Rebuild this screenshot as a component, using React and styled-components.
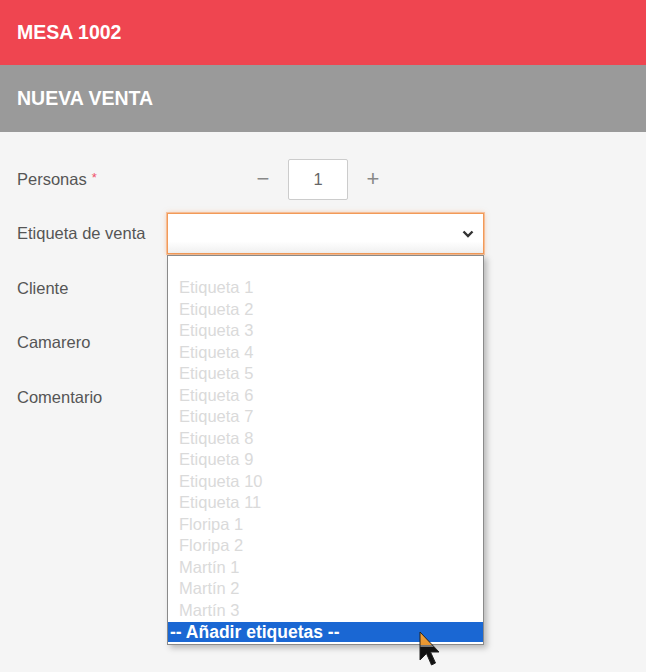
import React from "react";
import styled, { createGlobalStyle } from "styled-components";

const GlobalStyle = createGlobalStyle`
  html, body {
    margin: 0;
    padding: 0;
    background: #f5f5f5;
  }
  body {
    font-family: "Liberation Sans", Arial, sans-serif;
  }
`;

const Page = styled.div`
  width: 646px;
  height: 672px;
  background: #f5f5f5;
  overflow: hidden;
  position: relative;
`;

const Bar = styled.div`
  display: flex;
  align-items: center;
  height: ${(p) => p.$height}px;
  padding-left: 17px;
  background: ${(p) => p.$bg};
  color: #fff;
  font-weight: bold;
  font-size: 19.5px;
`;

const Form = styled.div`
  padding: 20px 0 0 17px;
`;

const Row = styled.div`
  display: grid;
  grid-template-columns: 150px 317px;
  align-items: center;
  height: 54.5px;
`;

const Label = styled.div`
  font-size: 16.5px;
  color: #555;
`;

const Required = styled.span`
  color: #f0506a;
  font-size: 13px;
  vertical-align: 3px;
  margin-left: 5px;
`;

const Stepper = styled.div`
  display: flex;
  align-items: center;
  gap: 13px;
  padding-left: 84px;
`;

const StepButton = styled.div`
  width: 24px;
  text-align: center;
  color: #888;
  font-size: 22px;
  line-height: 1;
`;

const NumberBox = styled.div`
  width: 58px;
  height: 39px;
  border: 1px solid #ccc;
  border-radius: 2px;
  background: #fff;
  display: flex;
  align-items: center;
  justify-content: center;
  font-size: 16.5px;
  color: #666;
`;

const SelectWrap = styled.div`
  position: relative;
`;

const SelectBox = styled.div`
  height: 39px;
  border: 1px solid #f29a58;
  box-shadow: 0 0 0 1px rgba(245, 160, 100, 0.55), 0 0 5px rgba(245, 150, 80, 0.5);
  background: linear-gradient(#fff 70%, #f0f0f0);
  display: flex;
  align-items: center;
  justify-content: flex-end;
  padding-right: 9px;
`;

const Popup = styled.div`
  position: absolute;
  top: 42px;
  left: 0;
  width: 315px;
  height: 388px;
  border: 1px solid #8a8a8a;
  background: #fff;
  box-shadow: 3px 3px 6px rgba(0, 0, 0, 0.25);
  z-index: 2;
  display: flex;
  flex-direction: column;
`;

const GroupLabel = styled.div`
  height: 21px;
`;

const Option = styled.div`
  height: 21.5px;
  line-height: 21.5px;
  padding-left: 11px;
  font-size: 16.5px;
  color: #dadada;
  white-space: nowrap;
`;

const ActiveOption = styled.div`
  margin-top: 1px;
  height: 20px;
  line-height: 20px;
  padding-left: 2px;
  background: #1a67d3;
  color: #fff;
  font-weight: bold;
  font-size: 17.5px;
  white-space: nowrap;
`;

const Cursor = styled.svg`
  position: absolute;
  left: 419px;
  top: 631px;
  z-index: 3;
`;

const options = [
  "Etiqueta 1",
  "Etiqueta 2",
  "Etiqueta 3",
  "Etiqueta 4",
  "Etiqueta 5",
  "Etiqueta 6",
  "Etiqueta 7",
  "Etiqueta 8",
  "Etiqueta 9",
  "Etiqueta 10",
  "Etiqueta 11",
  "Floripa 1",
  "Floripa 2",
  "Martín 1",
  "Martín 2",
  "Martín 3",
];

export default function App() {
  return (
    <Page>
      <GlobalStyle />
      <Bar $height={65} $bg="#ef4550">
        MESA 1002
      </Bar>
      <Bar $height={67} $bg="#9a9a9a">
        NUEVA VENTA
      </Bar>
      <Form>
        <Row>
          <Label>
            Personas<Required>*</Required>
          </Label>
          <Stepper>
            <StepButton>−</StepButton>
            <NumberBox>1</NumberBox>
            <StepButton>+</StepButton>
          </Stepper>
        </Row>
        <Row>
          <Label>Etiqueta de venta</Label>
          <SelectWrap>
            <SelectBox>
              <svg width="12" height="8" viewBox="0 0 12 8">
                <path
                  d="M1.5 1.5 L6 6 L10.5 1.5"
                  fill="none"
                  stroke="#333"
                  strokeWidth="2.4"
                />
              </svg>
            </SelectBox>
            <Popup>
              <GroupLabel />
              {options.map((o) => (
                <Option key={o}>{o}</Option>
              ))}
              <ActiveOption>-- Añadir etiquetas --</ActiveOption>
            </Popup>
          </SelectWrap>
        </Row>
        <Row>
          <Label>Cliente</Label>
        </Row>
        <Row>
          <Label>Camarero</Label>
        </Row>
        <Row>
          <Label>Comentario</Label>
        </Row>
      </Form>
      <Cursor width="24" height="38" viewBox="0 0 24 38">
        <defs>
          <linearGradient id="cur" x1="0" y1="0" x2="0" y2="1">
            <stop offset="0" stopColor="#f2a33a" />
            <stop offset="0.4" stopColor="#e89530" />
            <stop offset="0.4" stopColor="#777" />
            <stop offset="0.46" stopColor="#777" />
            <stop offset="0.46" stopColor="#111" />
            <stop offset="1" stopColor="#111" />
          </linearGradient>
        </defs>
        <path
          d="M1 1 L1 29 L7.5 22.5 L12.5 34 L16.5 32 L11.5 21 L20 21 Z"
          fill="url(#cur)"
          stroke="#222"
          strokeWidth="1"
          strokeLinejoin="round"
        />
      </Cursor>
    </Page>
  );
}
